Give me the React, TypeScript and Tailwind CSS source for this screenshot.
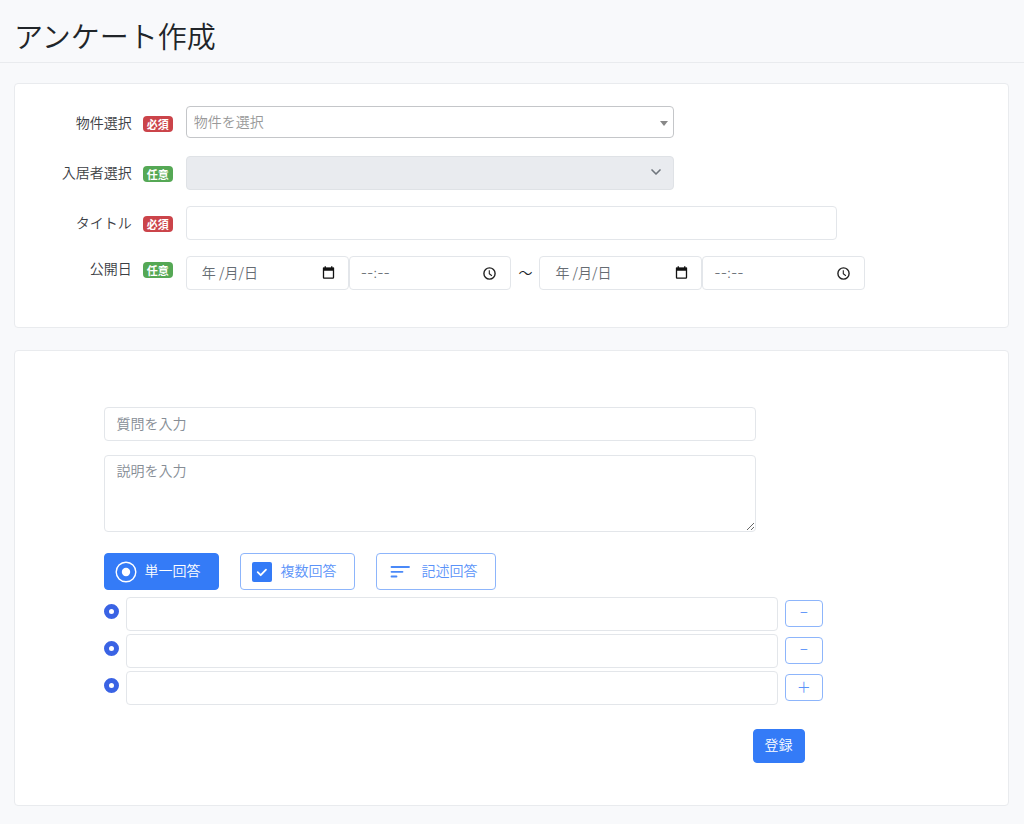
import React, { useState } from "react";
import { ChevronDown } from "lucide-react";
import clsx from "clsx";

type LABEL = {
  htmlFor: string;
  text: string;
  required?: boolean;
  compact?: boolean;
};

type DATETIME = {
  id: string;
  label: string;
};

const inputStyle =
  "block w-full h-[34px] px-[11px] pb-0.5 bg-white border border-[#e3e6ea] rounded text-sm text-[#212529] placeholder:text-[#868d95] focus:outline-none focus:border-[#347bf7]";

const Label: React.FC<LABEL> = ({ htmlFor, text, required, compact }) => {
  return (
    <div
      className={clsx(
        "w-1/6 shrink-0 flex items-center justify-end gap-[11px] pr-[13px]",
        compact ? "h-6" : "h-8"
      )}
    >
      <label htmlFor={htmlFor} className="text-sm text-[#3c4045]">
        {text}
      </label>
      <span
        className={clsx(
          "flex items-center h-4 px-1 mt-1 rounded text-[11px] leading-4 font-bold text-white",
          required ? "bg-[#cb444a]" : "bg-[#55a855]"
        )}
      >
        {required ? "必須" : "任意"}
      </span>
    </div>
  );
};

const CalendarIcon: React.FC = () => (
  <svg className="w-[13px] h-[13px]" viewBox="0 0 13 13" fill="none">
    <path d="M1.5 2.5h10v9a.7.7 0 0 1-.7.7H2.2a.7.7 0 0 1-.7-.7z" stroke="#111" strokeWidth={1.3} />
    <path d="M1 1.5h11v3.2H1zM2.6.2h1.3v2H2.6zM9.1.2h1.3v2H9.1z" fill="#111" />
  </svg>
);

const ClockIcon: React.FC = () => (
  <svg className="w-[13px] h-[13px]" viewBox="0 0 13 13" fill="none">
    <circle cx="6.5" cy="6.5" r="5.6" stroke="#222" strokeWidth={1.4} />
    <path d="M6.3 3.2v3.6l2.6 1.9" stroke="#222" strokeWidth={1.1} />
  </svg>
);

const DateInput: React.FC<DATETIME> = ({ id, label }) => (
  <div className="w-1/6 h-[34px] flex items-center pl-[15px] pr-[13px] pb-0.5 bg-white border border-[#e3e6ea] rounded">
    <input
      id={id}
      aria-label={label}
      type="text"
      placeholder="年 /月/日"
      className="flex-1 min-w-0 text-sm placeholder:text-[#666c73] focus:outline-none"
    />
    <button type="button" aria-label={`${label}を選択`}>
      <CalendarIcon />
    </button>
  </div>
);

const TimeInput: React.FC<DATETIME> = ({ id, label }) => (
  <div className="w-1/6 h-[34px] flex items-center pl-[11px] pr-[14px] bg-white border border-[#e3e6ea] rounded">
    <input
      id={id}
      aria-label={label}
      type="text"
      placeholder="--:--"
      className="flex-1 min-w-0 font-[Inter,sans-serif] text-sm placeholder:text-[#666c73] focus:outline-none"
    />
    <button type="button" aria-label={`${label}を選択`}>
      <ClockIcon />
    </button>
  </div>
);

const SingleIcon: React.FC = () => (
  <svg className="w-[22px] h-[22px]" viewBox="0 0 22 22" fill="none">
    <circle cx="11" cy="11" r="9.8" stroke="currentColor" strokeWidth={1.4} />
    <circle cx="11" cy="11" r="4.2" fill="currentColor" />
  </svg>
);

const MultiIcon: React.FC = () => (
  <svg className="w-[22px] h-[22px]" viewBox="0 0 22 22" fill="none">
    <rect x="1" y="1" width="20" height="20" rx="2" fill="#347bf7" />
    <path
      d="M6.7 11.2l3 3 5.3-5.6"
      stroke="#fff"
      strokeWidth={1.8}
      strokeLinecap="round"
      strokeLinejoin="round"
    />
  </svg>
);

const TextIcon: React.FC = () => (
  <svg className="w-[27px] h-[22px]" viewBox="0 0 27 22" fill="none">
    <path
      d="M4.5 6h17.5M4.5 10.8h11M4.5 15.5h5"
      stroke="#4a89f8"
      strokeWidth={1.8}
      strokeLinecap="round"
    />
  </svg>
);

const answerTypes = [
  { id: "single", text: "単一回答", icon: <SingleIcon /> },
  { id: "multi", text: "複数回答", icon: <MultiIcon /> },
  { id: "text", text: "記述回答", icon: <TextIcon /> },
];

const App: React.FC = () => {
  const [answerType, setAnswerType] = useState("single");
  const [options, setOptions] = useState<string[]>(["", "", ""]);

  const changeOption = (index: number, value: string) => {
    setOptions((prev) => prev.map((o, i) => (i === index ? value : o)));
  };
  const addOption = () => setOptions((prev) => [...prev, ""]);
  const removeOption = (index: number) => {
    setOptions((prev) => prev.filter((_, i) => i !== index));
  };

  return (
    <div className="min-h-screen bg-[#f8f9fb] font-['Noto_Sans_CJK_JP',sans-serif] font-[350] text-[#212529]">
      <header className="px-[14px] pt-[15px] pb-[7px] border-b border-[#e9ebee]">
        <h1 className="text-[29px] leading-10">アンケート作成</h1>
      </header>
      <form
        className="pt-5 pb-[18px] pl-[14px] pr-[15px] flex flex-col gap-[22px]"
        onSubmit={(e) => e.preventDefault()}
      >
        <section className="bg-white border border-[#e9ebee] rounded px-2 pt-[22px] pb-[37px] flex flex-col gap-4">
          <div className="flex items-start">
            <Label htmlFor="building" text="物件選択" required />
            <div className="w-1/2 h-[34px] relative">
              <select
                id="building"
                defaultValue=""
                className="appearance-none block w-full h-8 px-[7px] pb-0.5 bg-white border border-[#c4c6c9] rounded text-sm text-[#999]"
              >
                <option value="">物件を選択</option>
              </select>
              <svg
                className="absolute right-[6px] top-[15px] w-2 h-[5px] pointer-events-none"
                viewBox="0 0 8 5"
              >
                <path d="M0 0h8L4 5z" fill="#888" />
              </svg>
            </div>
          </div>
          <div className="flex items-start">
            <Label htmlFor="resident" text="入居者選択" />
            <div className="w-1/2 relative">
              <select
                id="resident"
                disabled
                className="appearance-none block w-full h-[34px] px-[11px] bg-[#e9ebef] border border-[#dfe2e6] rounded text-sm"
              ></select>
              <ChevronDown
                className="absolute right-[10px] top-2 w-4 h-4 text-[#6f757d] pointer-events-none"
                strokeWidth={2.5}
              />
            </div>
          </div>
          <div className="flex items-start">
            <Label htmlFor="title" text="タイトル" required />
            <div className="w-2/3">
              <input id="title" type="text" className={inputStyle} />
            </div>
          </div>
          <div className="flex items-start">
            <Label htmlFor="startDate" text="公開日" compact />
            <DateInput id="startDate" label="公開開始日" />
            <TimeInput id="startTime" label="公開開始時刻" />
            <span className="w-7 h-[34px] leading-8 text-center text-sm shrink-0">～</span>
            <DateInput id="endDate" label="公開終了日" />
            <TimeInput id="endTime" label="公開終了時刻" />
          </div>
        </section>

        <section className="bg-white border border-[#e9ebee] rounded px-2 pt-14 pb-[42px]">
          <div className="grid grid-cols-12">
            <div className="col-start-2 col-span-8 flex flex-col gap-[14px]">
              <input
                type="text"
                aria-label="質問"
                placeholder="質問を入力"
                className={inputStyle}
              />
              <textarea
                aria-label="説明"
                placeholder="説明を入力"
                className="block w-full h-[77px] px-[11px] py-1 bg-white border border-[#e3e6ea] rounded text-sm placeholder:text-[#868d95] focus:outline-none focus:border-[#347bf7]"
              ></textarea>
            </div>
            <div className="col-start-2 col-span-11 flex gap-[21px] mt-[21px] mb-[7px]">
              {answerTypes.map((type) => (
                <button
                  key={type.id}
                  type="button"
                  aria-pressed={answerType === type.id}
                  onClick={() => setAnswerType(type.id)}
                  className={clsx(
                    "h-[37px] pl-[10px] pr-[18px] flex items-center gap-[7px] border rounded text-sm",
                    answerType === type.id
                      ? "bg-[#347bf7] border-[#347bf7] text-white"
                      : "bg-white border-[#8db5fb] text-[#5a93f9]"
                  )}
                >
                  {type.icon}
                  <span className="pb-1">{type.text}</span>
                </button>
              ))}
            </div>
            <div className="col-start-2 col-span-11 flex flex-col gap-[3px]">
              {options.map((option, index) => (
                <div key={index} className="flex items-center gap-[7px]">
                  <input
                    type="radio"
                    aria-label={`選択肢${index + 1}`}
                    checked
                    readOnly
                    className="appearance-none shrink-0 w-[15px] h-[15px] mb-[5px] rounded-full bg-white border-[5px] border-[#3a63e4]"
                  />
                  <div className="w-8/11 shrink-0">
                    <input
                      type="text"
                      aria-label={`選択肢${index + 1}の内容`}
                      value={option}
                      onChange={(e) => changeOption(index, e.target.value)}
                      className={inputStyle}
                    />
                  </div>
                  {index === options.length - 1 ? (
                    <button
                      type="button"
                      aria-label="選択肢を追加"
                      onClick={addOption}
                      className="w-[38px] h-[27px] mb-0.5 pb-0.5 flex items-center justify-center border border-[#8db5fb] rounded text-sm text-[#5a93f9]"
                    >
                      ＋
                    </button>
                  ) : (
                    <button
                      type="button"
                      aria-label="選択肢を削除"
                      onClick={() => removeOption(index)}
                      className="w-[38px] h-[27px] mb-0.5 pb-0.5 flex items-center justify-center border border-[#8db5fb] rounded text-sm text-[#5a93f9]"
                    >
                      −
                    </button>
                  )}
                </div>
              ))}
            </div>
          </div>
          <div className="flex justify-end pr-[20%] mt-6">
            <button
              type="submit"
              className="h-[34px] px-[11px] pb-1 bg-[#347bf7] border border-[#347bf7] rounded text-sm text-white"
            >
              登録
            </button>
          </div>
        </section>
      </form>
    </div>
  );
};

export default App;
